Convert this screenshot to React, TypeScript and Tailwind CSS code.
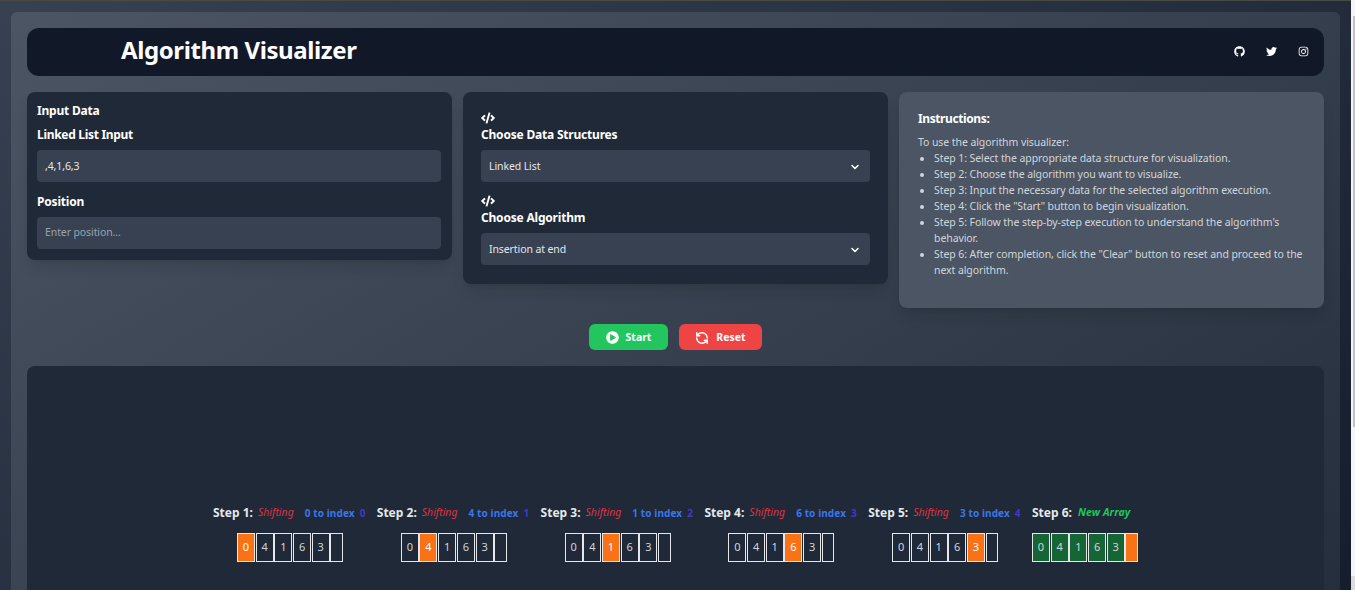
import { ChevronDown, RefreshCcw } from "lucide-react";
import { FaCode, FaGithub, FaTwitter, FaInstagram, FaPlayCircle } from "react-icons/fa";

const steps = [
    { value: 0, index: 0 },
    { value: 4, index: 1 },
    { value: 1, index: 2 },
    { value: 6, index: 3 },
    { value: 3, index: 4 },
];
const cells = ["0", "4", "1", "6", "3", ""];

function Field({ children }: { children: React.ReactNode }) {
    return (
        <div className="h-8 bg-[#374151] rounded flex items-center justify-between pl-2 pr-[9px] pt-px text-[10.5px] tracking-[-0.1px] text-[#e5e7eb]">
            {children}
        </div>
    );
}

function Cells({ active, done }: { active: number; done?: boolean }) {
    return (
        <div className="flex gap-[0.7px]">
            {cells.map((c, i) => (
                <div
                    key={i}
                    className={`h-[29px] border border-[#e5e7eb] flex items-center justify-center text-[11px] text-[#d1d5db] ${
                        c === "" ? "w-[12.5px]" : "w-[18px]"
                    } ${i === active ? "bg-[#f97316] text-white" : done ? "bg-[#166534]" : ""}`}
                >
                    {c}
                </div>
            ))}
        </div>
    );
}

export default function App() {
    return (
        <div className="h-[590px] overflow-hidden relative" style={{ fontFamily: '"Noto Sans", sans-serif' }}>
            <div className="h-[800px] bg-linear-to-br from-[#374151] to-[#111827] pl-[11px] pr-[15px] pt-[11px] border-t border-[#4a4a44]">
                <div className="h-[780px] bg-linear-to-br from-[#4b5563] to-[#1f2937] rounded-md p-4">
                    {/* header */}
                    <div className="h-12 bg-[#111827] rounded-xl flex items-center justify-between pl-[94px] pr-[15px]">
                        <h1 className="text-2xl font-bold text-white tracking-[-0.4px] pb-1">Algorithm Visualizer</h1>
                        <div className="flex items-center gap-[21px] text-white text-[11px] pb-[1px]">
                            <FaGithub />
                            <FaTwitter />
                            <FaInstagram />
                        </div>
                    </div>

                    <div className="grid grid-cols-3 gap-[11px] mt-4 items-start">
                        <div className="bg-[#1f2937] rounded-lg pl-[10px] pr-[11px] pt-[11px] pb-[11px] shadow-lg">
                            <div className="text-xs font-bold text-white leading-4 tracking-[-0.2px]">Input Data</div>
                            <div className="text-xs font-bold text-white leading-4 tracking-[-0.3px] mt-2 mb-[7px]">Linked List Input</div>
                            <Field>,4,1,6,3</Field>
                            <div className="text-xs font-bold text-white leading-4 tracking-[-0.2px] mt-3 mb-[7px]">Position</div>
                            <Field><span className="text-[#9ca3af] mb-[2px]">Enter position...</span></Field>
                        </div>

                        <div className="bg-[#1f2937] rounded-lg px-[18px] pt-[19px] pb-[19px] shadow-lg">
                            <FaCode className="text-[14px] text-white" />
                            <div className="text-xs font-bold text-white leading-4 tracking-[-0.2px] mt-[2px] mb-[7px]">Choose Data Structures</div>
                            <Field>Linked List<ChevronDown className="w-3 h-3 text-white" strokeWidth={3} /></Field>
                            <FaCode className="text-[14px] text-white mt-3" />
                            <div className="text-xs font-bold text-white leading-4 tracking-[-0.2px] mt-[2px] mb-[7px]">Choose Algorithm</div>
                            <Field>Insertion at end<ChevronDown className="w-3 h-3 text-white" strokeWidth={3} /></Field>
                        </div>

                        <div className="bg-[#4b5563] rounded-lg h-[216px] pl-[19px] pr-[18px] pt-[19px] shadow-lg">
                            <div className="text-xs font-bold text-white leading-4 tracking-[-0.4px] mb-[7px]">Instructions:</div>
                            <div className="text-[10.5px] leading-4 tracking-[-0.08px] text-[#d1d5db]">
                                <p>To use the algorithm visualizer:</p>
                                <ul className="list-disc pl-4">
                                    <li>Step 1: Select the appropriate data structure for visualization.</li>
                                    <li>Step 2: Choose the algorithm you want to visualize.</li>
                                    <li>Step 3: Input the necessary data for the selected algorithm execution.</li>
                                    <li>Step 4: Click the "Start" button to begin visualization.</li>
                                    <li>Step 5: Follow the step-by-step execution to understand the algorithm's behavior.</li>
                                    <li>Step 6: After completion, click the "Clear" button to reset and proceed to the next algorithm.</li>
                                </ul>
                            </div>
                        </div>
                    </div>

                    <div className="flex justify-center gap-[11px] mt-4">
                        <button className="w-[79px] h-[26px] bg-[#22c55e] rounded-md flex items-center justify-center gap-[7px] pt-px text-white text-[10.5px] font-bold">
                            <FaPlayCircle className="text-[13px]" />Start
                        </button>
                        <button className="w-[83px] h-[26px] bg-[#ef4444] rounded-md flex items-center justify-center gap-[7px] pt-px text-white text-[10.5px] font-bold">
                            <RefreshCcw className="w-[14px] h-[14px]" strokeWidth={2.6} />Reset
                        </button>
                    </div>

                    <div className="h-[300px] bg-[#1f2937] rounded-lg mt-4 pt-[139px] pl-[186px] flex items-start">
                        {steps.map((s, i) => (
                            <div key={i} className="w-[163.8px]">
                                <div className="flex items-center h-4 text-[10px] whitespace-nowrap">
                                    <span className="text-xs font-bold text-[#e5e7eb] mr-[5px]">Step {i + 1}:</span>
                                    <span className="italic text-[10.5px] text-[#dc3545] mr-[11px]">Shifting</span>
                                    <span className="font-bold tracking-[0.1px] text-[#3b76ea] mr-[5px]">{s.value} to index</span>
                                    <span className="font-bold text-[#4338ca]">{s.index}</span>
                                </div>
                                <div className="mt-[12px] ml-6"><Cells active={i} /></div>
                            </div>
                        ))}
                        <div>
                            <div className="flex items-center h-4 whitespace-nowrap">
                                <span className="text-xs font-bold text-[#e5e7eb] mr-[6px]">Step 6:</span>
                                <span className="italic font-bold text-[10.5px] tracking-[0.1px] text-[#22c55e]">New Array</span>
                            </div>
                            <div className="mt-[12px]"><Cells active={5} done /></div>
                        </div>
                    </div>
                </div>
            </div>

            {/* browser scrollbar from the screenshot */}
            <div className="absolute top-0 right-0 bottom-0 w-1 bg-[#f5f5f5] flex flex-col">
                <div className="h-4" />
                <div className="h-[411px] w-[2px] ml-auto bg-[#c1c1c1]" />
                <div className="h-[14px] mt-auto bg-[#dcdcdc]" />
            </div>
        </div>
    );
}
